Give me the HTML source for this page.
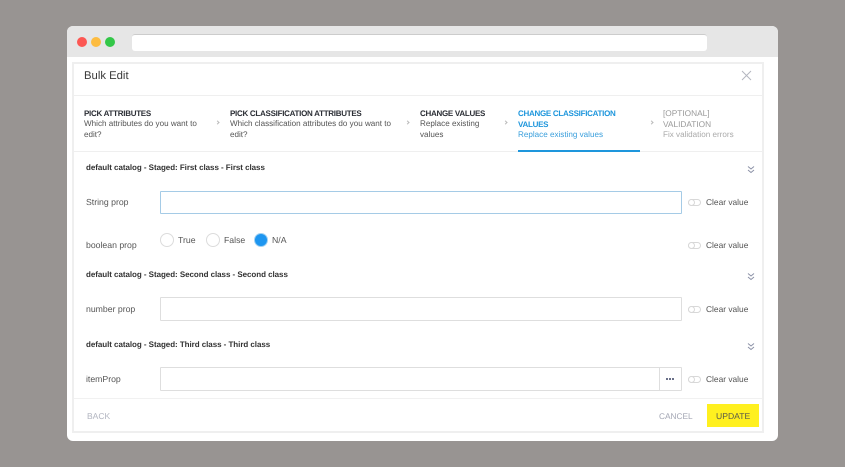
<!DOCTYPE html>
<html><head><meta charset="utf-8">
<style>
html,body{margin:0;padding:0;width:845px;height:467px;overflow:hidden;background:#989492}
body{position:relative;font-family:"Liberation Sans","DejaVu Sans",sans-serif;color:#333;text-rendering:geometricPrecision}
#w{position:absolute;left:0;top:0;width:845px;height:467px;background:#989492;overflow:hidden;filter:blur(.3px)}
.a{position:absolute}
.t{position:absolute;white-space:nowrap}
.h{font-size:8px;color:#2c2f36;font-weight:bold;letter-spacing:-.28px;line-height:11px}
.s{font-size:8.1px;color:#555;line-height:11px;letter-spacing:0}
.g{font-size:8px;color:#333;font-weight:bold;letter-spacing:-.05px;line-height:12px}
.l{font-size:8.7px;color:#555;letter-spacing:0;line-height:12px}
.c{font-size:8.4px;color:#555;letter-spacing:0;line-height:12px}
.i{position:absolute;box-sizing:border-box;background:#fff;border:1px solid #dedede;border-radius:1px}
.tg{position:absolute;width:13px;height:7px;border:1px solid #d8d8d8;border-radius:5px;box-sizing:border-box;background:#fff}
.tg:after{content:"";position:absolute;left:-1px;top:-1px;width:7px;height:7px;box-sizing:border-box;border:1px solid #d8d8d8;border-radius:50%;background:#fff}
.r{position:absolute;width:14px;height:14px;box-sizing:border-box;border:1px solid #dcdcdc;border-radius:50%;background:#fff}
.ar{position:absolute;width:2px;height:2px;border-top:1px solid #bbb;border-right:1px solid #bbb;transform:rotate(45deg);box-sizing:content-box}
</style></head><body><div id="w">
<div class="a" style="left:67px;top:26px;width:711px;height:415px;background:#fff;border-radius:6px;overflow:hidden">
  <div class="a" style="left:0;top:0;width:711px;height:31px;background:#e6e6e6"></div>
</div>
<div class="a" style="left:77px;top:37px;width:10px;height:10px;border-radius:50%;background:#fc5753"></div>
<div class="a" style="left:91px;top:37px;width:10px;height:10px;border-radius:50%;background:#fdbc40"></div>
<div class="a" style="left:105px;top:37px;width:10px;height:10px;border-radius:50%;background:#33c748"></div>
<div class="a" style="left:132px;top:34px;width:575px;height:17px;background:#fff;border-radius:3px;border-top:1px solid #ccc;box-sizing:border-box"></div>

<div class="a" style="left:72px;top:62px;width:692px;height:371px;box-sizing:border-box;border:2px solid #efefef;background:#fff"></div>
<div class="a" style="left:74px;top:95px;width:688px;height:1px;background:#efefef"></div>
<div class="a" style="left:74px;top:151px;width:688px;height:1px;background:#efefef"></div>
<div class="a" style="left:74px;top:398px;width:688px;height:1px;background:#f1f1f1"></div>

<div class="t" style="left:84px;top:69px;font-size:11.3px;line-height:15px;color:#3a3a3a;letter-spacing:0">Bulk Edit</div>
<svg class="a" style="left:741px;top:70px" width="11" height="11" viewBox="0 0 11 11"><path d="M1 1L10 10M10 1L1 10" stroke="#b4b6c0" stroke-width="1" fill="none"/></svg>

<div class="t h" style="left:84px;top:108px">PICK ATTRIBUTES</div>
<div class="t s" style="left:84px;top:118px">Which attributes do you want to<br>edit?</div>
<div class="ar" style="left:216px;top:121px"></div>
<div class="t h" style="left:230px;top:108px">PICK CLASSIFICATION ATTRIBUTES</div>
<div class="t s" style="left:230px;top:118px">Which classification attributes do you want to<br>edit?</div>
<div class="ar" style="left:406px;top:121px"></div>
<div class="t h" style="left:420px;top:108px">CHANGE VALUES</div>
<div class="t s" style="left:420px;top:118px">Replace existing<br>values</div>
<div class="ar" style="left:504px;top:121px"></div>
<div class="t h" style="left:518px;top:108px;color:#1e96dc;line-height:11px">CHANGE CLASSIFICATION<br>VALUES</div>
<div class="t s" style="left:518px;top:129px;color:#3a9fdc">Replace existing values</div>
<div class="a" style="left:518px;top:150px;width:122px;height:1.5px;background:#1e96dc"></div>
<div class="ar" style="left:650px;top:121px"></div>
<div class="t" style="left:663px;top:108px;font-size:8.3px;line-height:11px;color:#9a9a9a;letter-spacing:0">[OPTIONAL]<br>VALIDATION</div>
<div class="t s" style="left:663px;top:129px;color:#aaa">Fix validation errors</div>

<div class="t g" style="left:86px;top:162px">default catalog - Staged: First class - First class</div>
<svg class="a" style="left:747px;top:165px" width="8" height="9" viewBox="0 0 8 9"><path d="M1 1.5L4 4L7 1.5M1 5L4 7.5L7 5" stroke="#8a90a6" stroke-width="1" fill="none"/></svg>

<div class="t l" style="left:86px;top:196px">String prop</div>
<div class="i" style="left:160px;top:191px;width:522px;height:23px;border-color:#a5cbe6"></div>
<div class="tg" style="left:688px;top:199px"></div>
<div class="t c" style="left:706px;top:196px">Clear value</div>

<div class="t l" style="left:86px;top:239px">boolean prop</div>
<div class="r" style="left:160px;top:233px"></div>
<div class="t l" style="left:178px;top:234px">True</div>
<div class="r" style="left:206px;top:233px"></div>
<div class="t l" style="left:224px;top:234px">False</div>
<div class="r" style="left:254px;top:233px;background:#1e96f0;border:1px solid #9fd0f2"></div>
<div class="t l" style="left:272px;top:234px">N/A</div>
<div class="tg" style="left:688px;top:242px"></div>
<div class="t c" style="left:706px;top:239px">Clear value</div>

<div class="t g" style="left:86px;top:269px">default catalog - Staged: Second class - Second class</div>
<svg class="a" style="left:747px;top:272px" width="8" height="9" viewBox="0 0 8 9"><path d="M1 1.5L4 4L7 1.5M1 5L4 7.5L7 5" stroke="#8a90a6" stroke-width="1" fill="none"/></svg>

<div class="t l" style="left:86px;top:303px">number prop</div>
<div class="i" style="left:160px;top:297px;width:522px;height:24px"></div>
<div class="tg" style="left:688px;top:306px"></div>
<div class="t c" style="left:706px;top:303px">Clear value</div>

<div class="t g" style="left:86px;top:339px">default catalog - Staged: Third class - Third class</div>
<svg class="a" style="left:747px;top:342px" width="8" height="9" viewBox="0 0 8 9"><path d="M1 1.5L4 4L7 1.5M1 5L4 7.5L7 5" stroke="#8a90a6" stroke-width="1" fill="none"/></svg>

<div class="t l" style="left:86px;top:373px">itemProp</div>
<div class="i" style="left:160px;top:367px;width:522px;height:24px"></div>
<div class="a" style="left:659px;top:368px;width:1px;height:22px;background:#dedede"></div>
<div class="a" style="left:666px;top:378px;width:2px;height:2px;background:#6a7088;box-shadow:3px 0 0 #6a7088,6px 0 0 #6a7088"></div>
<div class="tg" style="left:688px;top:376px"></div>
<div class="t c" style="left:706px;top:373px">Clear value</div>

<div class="t" style="left:87px;top:410px;font-size:8.5px;line-height:12px;color:#b2b5c0">BACK</div>
<div class="t" style="left:659px;top:410px;font-size:8.3px;line-height:12px;color:#a4a7b4">CANCEL</div>
<div class="a" style="left:707px;top:404px;width:52px;height:23px;background:#fff01f"></div>
<div class="t" style="left:716px;top:410px;font-size:8.6px;line-height:12px;color:#5a5a4a">UPDATE</div>
</div></body></html>
